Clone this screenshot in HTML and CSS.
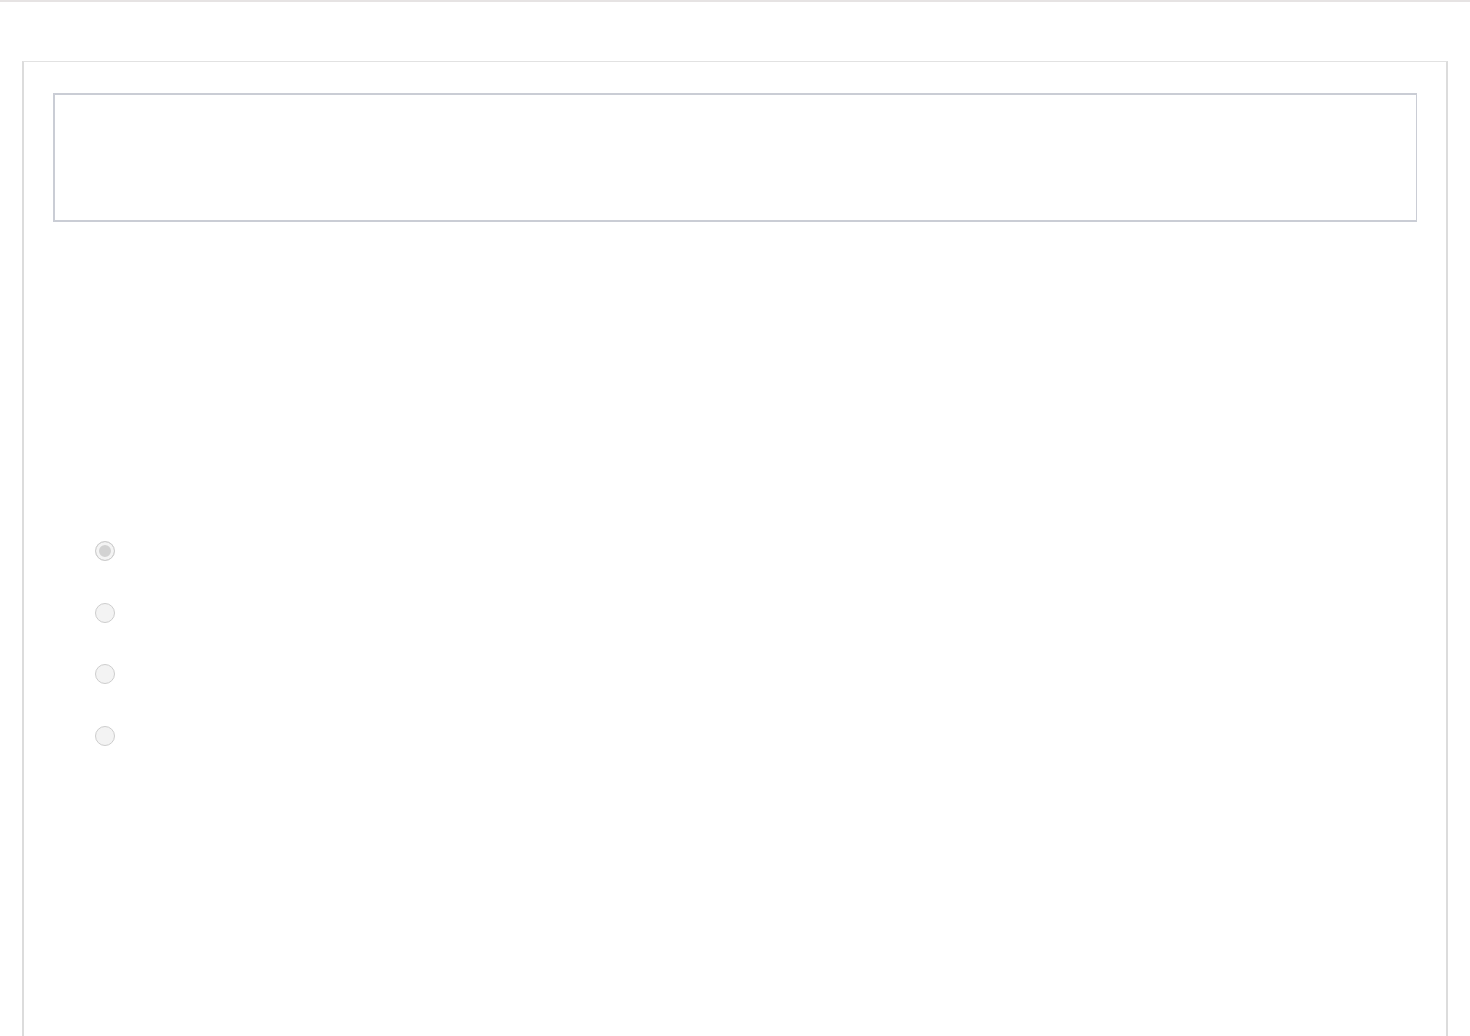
FILE: index.html
```html
<!DOCTYPE html>
<html>
<head>
<meta charset="utf-8">
<link rel="stylesheet" href="styles.css">
</head>
<body>
<div class="topline"></div>
<main class="panel">
  <div class="header-box"></div>
  <div class="options">
    <label class="option"><input type="radio" name="q" class="radio" checked disabled></label>
    <label class="option"><input type="radio" name="q" class="radio" disabled></label>
    <label class="option"><input type="radio" name="q" class="radio" disabled></label>
    <label class="option"><input type="radio" name="q" class="radio" disabled></label>
  </div>
</main>
</body>
</html>
```
FILE: styles.css
```css
html, body {
  margin: 0;
  padding: 0;
  background: #ffffff;
  font-family: "Liberation Sans", Arial, sans-serif;
  overflow: hidden;
}
.topline {
  height: 2px;
  background: #e6e3e3;
}
.panel {
  margin: 59px 22px 0 22px;
  border-top: 1px solid #e2e2e2;
  border-left: 2px solid #dcdcdc;
  border-right: 2px solid #dcdcdc;
  min-height: 1100px;
  padding: 31px 29px 0 29px;
  box-sizing: border-box;
}
.header-box {
  height: 129px;
  border: 2px solid #cacdd5;
  border-right-width: 1px;
  box-sizing: border-box;
}
.options {
  margin-top: 319px;
  padding-left: 42px;
  display: flex;
  flex-direction: column;
}
.option {
  height: 61.6px;
  display: flex;
  align-items: flex-start;
}
.radio {
  appearance: none;
  -webkit-appearance: none;
  margin: 0;
  width: 20px;
  height: 20px;
  border-radius: 50%;
  border: 1.5px solid #cdcdcd;
  background: #f3f3f3;
  box-sizing: border-box;
}
.radio:checked {
  background: #d2d2d2;
  box-shadow: inset 0 0 0 3px #f4f4f4;
}
```
